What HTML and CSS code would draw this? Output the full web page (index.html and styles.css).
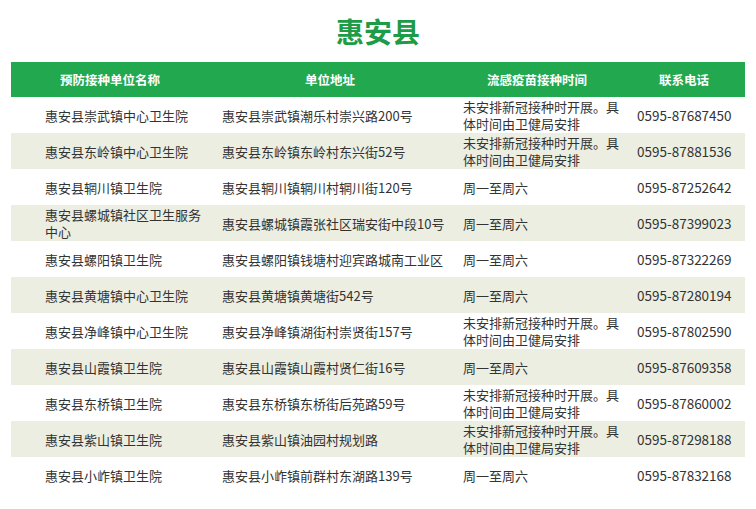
FILE: index.html
```html
<!DOCTYPE html>
<html lang="zh-CN">
<head>
<meta charset="utf-8">
<link rel="stylesheet" href="styles.css">
</head>
<body>
<div class="page">
  <h1 class="title">惠安县</h1>
  <div class="table">
    <div class="row head">
      <div class="c c1">预防接种单位名称</div>
      <div class="c c2">单位地址</div>
      <div class="c c3">流感疫苗接种时间</div>
      <div class="c c4">联系电话</div>
    </div>
    <div class="row">
      <div class="c c1">惠安县崇武镇中心卫生院</div>
      <div class="c c2">惠安县崇武镇潮乐村崇兴路200号</div>
      <div class="c c3">未安排新冠接种时开展。具体时间由卫健局安排</div>
      <div class="c c4">0595-87687450</div>
    </div>
    <div class="row alt">
      <div class="c c1">惠安县东岭镇中心卫生院</div>
      <div class="c c2">惠安县东岭镇东岭村东兴街52号</div>
      <div class="c c3">未安排新冠接种时开展。具体时间由卫健局安排</div>
      <div class="c c4">0595-87881536</div>
    </div>
    <div class="row">
      <div class="c c1">惠安县辋川镇卫生院</div>
      <div class="c c2">惠安县辋川镇辋川村辋川街120号</div>
      <div class="c c3">周一至周六</div>
      <div class="c c4">0595-87252642</div>
    </div>
    <div class="row alt">
      <div class="c c1">惠安县螺城镇社区卫生服务中心</div>
      <div class="c c2">惠安县螺城镇霞张社区瑞安街中段10号</div>
      <div class="c c3">周一至周六</div>
      <div class="c c4">0595-87399023</div>
    </div>
    <div class="row">
      <div class="c c1">惠安县螺阳镇卫生院</div>
      <div class="c c2">惠安县螺阳镇钱塘村迎宾路城南工业区</div>
      <div class="c c3">周一至周六</div>
      <div class="c c4">0595-87322269</div>
    </div>
    <div class="row alt">
      <div class="c c1">惠安县黄塘镇中心卫生院</div>
      <div class="c c2">惠安县黄塘镇黄塘街542号</div>
      <div class="c c3">周一至周六</div>
      <div class="c c4">0595-87280194</div>
    </div>
    <div class="row">
      <div class="c c1">惠安县净峰镇中心卫生院</div>
      <div class="c c2">惠安县净峰镇湖街村崇贤街157号</div>
      <div class="c c3">未安排新冠接种时开展。具体时间由卫健局安排</div>
      <div class="c c4">0595-87802590</div>
    </div>
    <div class="row alt">
      <div class="c c1">惠安县山霞镇卫生院</div>
      <div class="c c2">惠安县山霞镇山霞村贤仁街16号</div>
      <div class="c c3">周一至周六</div>
      <div class="c c4">0595-87609358</div>
    </div>
    <div class="row">
      <div class="c c1">惠安县东桥镇卫生院</div>
      <div class="c c2">惠安县东桥镇东桥街后苑路59号</div>
      <div class="c c3">未安排新冠接种时开展。具体时间由卫健局安排</div>
      <div class="c c4">0595-87860002</div>
    </div>
    <div class="row alt">
      <div class="c c1">惠安县紫山镇卫生院</div>
      <div class="c c2">惠安县紫山镇油园村规划路</div>
      <div class="c c3">未安排新冠接种时开展。具体时间由卫健局安排</div>
      <div class="c c4">0595-87298188</div>
    </div>
    <div class="row">
      <div class="c c1">惠安县小岞镇卫生院</div>
      <div class="c c2">惠安县小岞镇前群村东湖路139号</div>
      <div class="c c3">周一至周六</div>
      <div class="c c4">0595-87832168</div>
    </div>
  </div>
</div>
</body>
</html>
```
FILE: styles.css
```css
html, body {
  margin: 0;
  padding: 0;
  background: #ffffff;
}
body {
  font-family: "Noto Sans CJK SC", "Noto Sans", sans-serif;
  color: #333333;
}
.page {
  width: 756px;
  height: 509px;
  overflow: hidden;
}
.title {
  margin: 0;
  height: 62px;
  display: flex;
  align-items: center;
  justify-content: center;
  font-size: 28px;
  font-weight: 700;
  color: #1e9b46;
  letter-spacing: 0;
}
.table {
  margin-left: 11px;
  width: 734px;
}
.row {
  display: grid;
  grid-template-columns: 198px 242px 172px 122px;
  height: 36px;
}
.row.alt {
  background: #eceee1;
}
.row.head {
  height: 35px;
  background: #22a84f;
}
.c {
  display: flex;
  align-items: center;
  font-size: 13px;
  line-height: 17px;
}
.c1 { padding-left: 34px; padding-right: 6px; }
.c2 { padding-left: 13px; }
.c3 { padding-left: 12px; padding-right: 4px; }
.c4 { padding-left: 14px; font-size: 13.5px; }
.head .c {
  justify-content: center;
  padding: 0;
  color: #ffffff;
  font-weight: 700;
  font-size: 12.5px;
}
```
